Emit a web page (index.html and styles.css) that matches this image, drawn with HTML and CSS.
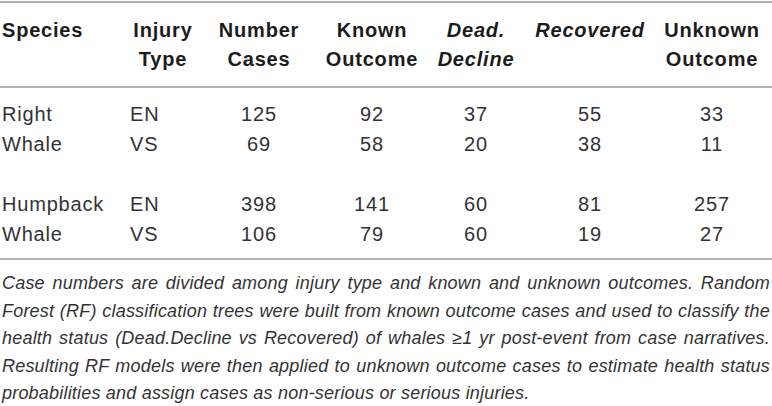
FILE: index.html
```html
<!DOCTYPE html>
<html lang="en">
<head>
    <meta charset="UTF-8">
    <meta name="viewport" content="width=device-width, initial-scale=1.0">
    <title>Whale injury cases</title>
    <link rel="stylesheet" href="styles.css">
</head>
<body>
    <div class="table-wrap">
        <table class="cases">
            <colgroup>
                <col class="c-species">
                <col class="c-type">
                <col class="c-number">
                <col class="c-known">
                <col class="c-dead">
                <col class="c-recovered">
                <col class="c-unknown">
            </colgroup>
            <thead>
                <tr>
                    <th class="left">Species</th>
                    <th>Injury<br>Type</th>
                    <th>Number<br>Cases</th>
                    <th>Known<br>Outcome</th>
                    <th class="em">Dead.<br>Decline</th>
                    <th class="em">Recovered</th>
                    <th>Unknown<br>Outcome</th>
                </tr>
            </thead>
            <tbody>
                <tr class="first">
                    <td class="left">Right</td>
                    <td class="left">EN</td>
                    <td>125</td>
                    <td>92</td>
                    <td>37</td>
                    <td>55</td>
                    <td>33</td>
                </tr>
                <tr>
                    <td class="left">Whale</td>
                    <td class="left">VS</td>
                    <td>69</td>
                    <td>58</td>
                    <td>20</td>
                    <td>38</td>
                    <td>11</td>
                </tr>
                <tr class="spacer">
                    <td colspan="7"></td>
                </tr>
                <tr>
                    <td class="left">Humpback</td>
                    <td class="left">EN</td>
                    <td>398</td>
                    <td>141</td>
                    <td>60</td>
                    <td>81</td>
                    <td>257</td>
                </tr>
                <tr class="last">
                    <td class="left">Whale</td>
                    <td class="left">VS</td>
                    <td>106</td>
                    <td>79</td>
                    <td>60</td>
                    <td>19</td>
                    <td>27</td>
                </tr>
            </tbody>
        </table>
        <p class="note">Case numbers are divided among injury type and known and unknown outcomes. Random Forest (RF) classification trees were built from known outcome cases and used to classify the health status (Dead.Decline vs Recovered) of whales &ge;1 yr post-event from case narratives. Resulting RF models were then applied to unknown outcome cases to estimate health status probabilities and assign cases as non-serious or serious injuries.</p>
    </div>
</body>
</html>
```

FILE: styles.css
```css
/* Table page */
body {
    margin: 0;
    background: #ffffff;
    font-family: "Liberation Sans", Arial, sans-serif;
    color: #2b2b2b;
}

.table-wrap {
    width: 772px;
    padding-top: 1px;
}

.cases {
    width: 772px;
    border-collapse: collapse;
    table-layout: fixed;
    border-top: 2px solid #b3b3b3;
    border-bottom: 2px solid #b3b3b3;
}

/* Column widths */
.c-species { width: 128px; }
.c-type { width: 70px; }
.c-number { width: 122px; }
.c-known { width: 104px; }
.c-dead { width: 104px; }
.c-recovered { width: 124px; }
.c-unknown { width: 120px; }

.cases th,
.cases td {
    padding: 0;
    font-size: 20px;
    letter-spacing: 0.8px;
    text-align: center;
    white-space: nowrap;
}

.cases th {
    font-weight: bold;
    color: #1c1c1c;
    line-height: 29px;
    vertical-align: top;
    padding-top: 13px;
    padding-bottom: 12px;
    border-bottom: 2px solid #b3b3b3;
}

.cases th.em {
    font-style: italic;
}

.cases td {
    line-height: 30px;
    color: #333333;
}

.cases .left {
    text-align: left;
    padding-left: 2px;
}

.cases tr.first td {
    padding-top: 11px;
}

.cases tr.last td {
    padding-bottom: 9px;
}

.cases tr.spacer td {
    height: 30px;
}

/* Caption under the table */
.note {
    margin: 10px 0 0;
    padding: 0 2px;
    font-size: 18px;
    line-height: 27.5px;
    font-style: italic;
    letter-spacing: 0.2px;
    text-align: justify;
    color: #333333;
}
```
